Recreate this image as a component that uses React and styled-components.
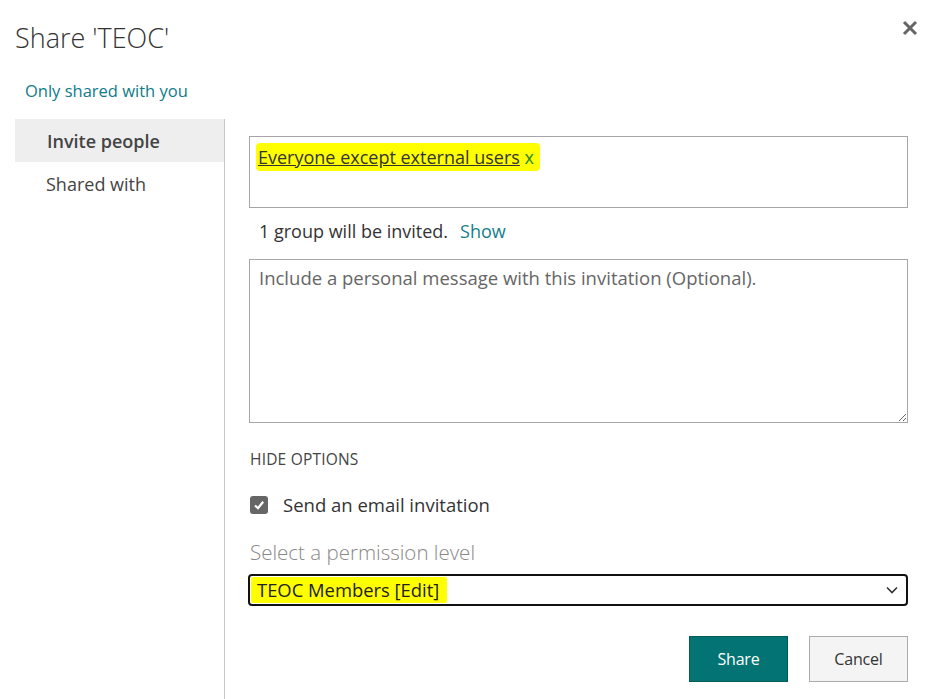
import React from "react";
import styled, { createGlobalStyle } from "styled-components";

const Global = createGlobalStyle`
  html, body { margin: 0; padding: 0; background: #fff; }
  body { font-family: "Open Sans", "Noto Sans", "Liberation Sans", sans-serif; color: #333; }
  * { box-sizing: border-box; }
`;

const Dialog = styled.div`
  width: 930px;
  height: 699px;
  padding: 0 22px 0 15px;
  display: flex;
  flex-direction: column;
  overflow: hidden;
`;

const Header = styled.div`
  display: flex;
  justify-content: space-between;
  align-items: flex-start;
  padding-top: 19px;
`;

const Title = styled.h1`
  margin: 0;
  font-size: 27px;
  font-weight: 300;
  line-height: 38px;
  color: #333;
`;

const Close = styled.button`
  border: 0;
  background: none;
  padding: 0;
  margin-top: 0;
  margin-right: -11px;
  width: 18px;
  height: 18px;
  cursor: pointer;
  display: flex;
  align-items: center;
  justify-content: center;
`;

const Subtitle = styled.a`
  display: block;
  margin: 23px 0 0 10px;
  font-size: 16.5px;
  line-height: 22px;
  color: #0f7b8a;
  text-decoration: none;
`;

const Body = styled.div`
  flex: 1;
  display: flex;
  margin-top: 17px;
`;

const Nav = styled.nav`
  width: 210px;
  border-right: 1px solid #c8c8c8;
  display: flex;
  flex-direction: column;
`;

const NavItem = styled.div`
  height: 43px;
  display: flex;
  align-items: center;
  padding-left: ${(p) => (p.$active ? 32 : 31)}px;
  font-size: 18px;
  font-weight: ${(p) => (p.$active ? 600 : 400)};
  background: ${(p) => (p.$active ? "#eeeeee" : "transparent")};
  color: #444;
`;

const Content = styled.div`
  flex: 1;
  padding: 17px 0 0 24px;
  display: flex;
  flex-direction: column;
`;

const PeopleBox = styled.div`
  height: 72px;
  border: 1px solid #a6a6a6;
  padding: 8px 8px;
  font-size: 18px;
  line-height: 24px;
`;

const Highlight = styled.span`
  background: #ffff00;
  border-radius: 4px;
  padding: 2px 6px 2px 2px;
  margin-left: -2px;
`;

const PersonName = styled.span`
  color: #333;
  text-decoration: underline;
`;

const Remove = styled.span`
  color: #2a8a2a;
`;

const InviteInfo = styled.div`
  margin: 11px 0 0 10px;
  font-size: 18px;
  line-height: 24px;
  color: #333;
`;

const Link = styled.a`
  color: #14808c;
  margin-left: 12px;
`;

const Message = styled.textarea`
  margin-top: 16px;
  height: 164px;
  width: 100%;
  border: 1px solid #a6a6a6;
  padding: 6px 9px;
  font-family: inherit;
  font-size: 18.5px;
  line-height: 24px;
  color: #333;
  resize: both;
  outline: none;
  &::placeholder { color: #666; }
`;

const OptionsToggle = styled.div`
  margin: 26px 0 0 1px;
  font-size: 15.5px;
  line-height: 20px;
  color: #444;
  letter-spacing: 0.2px;
`;

const CheckRow = styled.label`
  margin-top: 24px;
  display: flex;
  align-items: center;
  gap: 15px;
  padding-left: 1px;
  font-size: 18.5px;
  line-height: 24px;
  color: #333;
`;

const CheckBox = styled.span`
  width: 18px;
  height: 18px;
  border-radius: 3px;
  background: #666;
  display: flex;
  align-items: center;
  justify-content: center;
`;

const FieldLabel = styled.div`
  margin: 22px 0 0 1px;
  font-size: 20.5px;
  font-weight: 300;
  line-height: 26px;
  color: #888;
`;

const Select = styled.div`
  margin: 9px 0 0 -1px;
  height: 32px;
  border: 2px solid #111;
  border-radius: 4px;
  display: flex;
  align-items: center;
  justify-content: space-between;
  padding: 0 8px 0 1px;
  font-size: 18.4px;
  color: #222;
`;

const SelectValue = styled.span`
  background: #ffff00;
  padding: 1px 8px 1px 6px;
  line-height: 24px;
  border-radius: 2px;
`;

const Actions = styled.div`
  margin-top: 30px;
  display: flex;
  justify-content: flex-end;
  gap: 21px;
`;

const Button = styled.button`
  width: 99px;
  height: 46px;
  font-family: inherit;
  font-size: 16px;
  letter-spacing: -0.2px;
  cursor: pointer;
  border: 1px solid ${(p) => (p.$primary ? "#035c5c" : "#ababab")};
  background: ${(p) => (p.$primary ? "#037373" : "#f4f4f4")};
  color: ${(p) => (p.$primary ? "#fff" : "#333")};
`;

export default function App() {
  return (
    <>
      <Global />
      <Dialog>
        <Header>
          <Title>Share 'TEOC'</Title>
          <Close aria-label="Close">
            <svg width="16" height="16" viewBox="0 0 16 16">
              <path d="M2 2 L14 14 M14 2 L2 14" stroke="#666" strokeWidth="3" />
            </svg>
          </Close>
        </Header>
        <Subtitle>Only shared with you</Subtitle>
        <Body>
          <Nav>
            <NavItem $active>Invite people</NavItem>
            <NavItem>Shared with</NavItem>
          </Nav>
          <Content>
            <PeopleBox>
              <Highlight>
                <PersonName>Everyone except external users</PersonName> <Remove>x</Remove>
              </Highlight>
            </PeopleBox>
            <InviteInfo>
              1 group will be invited.<Link>Show</Link>
            </InviteInfo>
            <Message placeholder="Include a personal message with this invitation (Optional)." />
            <OptionsToggle>HIDE OPTIONS</OptionsToggle>
            <CheckRow>
              <CheckBox>
                <svg width="12" height="12" viewBox="0 0 12 12">
                  <path d="M2 6.5 L5 9.2 L10.2 2.8" fill="none" stroke="#fff" strokeWidth="2.2" />
                </svg>
              </CheckBox>
              Send an email invitation
            </CheckRow>
            <FieldLabel>Select a permission level</FieldLabel>
            <Select>
              <SelectValue>TEOC Members [Edit]</SelectValue>
              <svg width="12" height="8" viewBox="0 0 12 8">
                <path d="M1 1.5 L6 6.5 L11 1.5" fill="none" stroke="#333" strokeWidth="1.6" />
              </svg>
            </Select>
            <Actions>
              <Button $primary>Share</Button>
              <Button>Cancel</Button>
            </Actions>
          </Content>
        </Body>
      </Dialog>
    </>
  );
}
